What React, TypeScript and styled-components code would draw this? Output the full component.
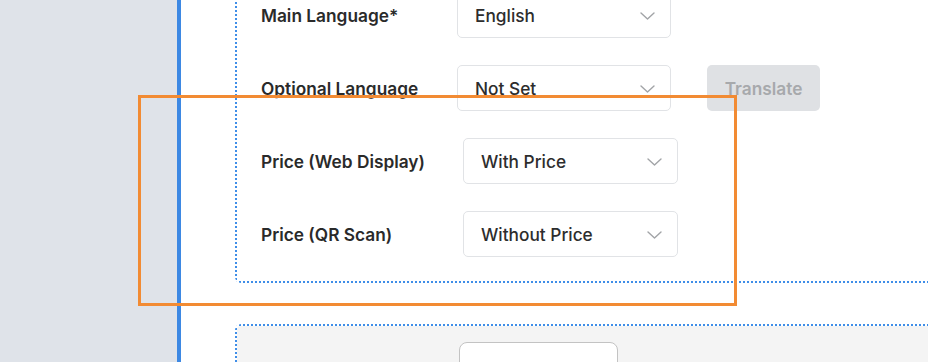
import { styled, createGlobalStyle } from "styled-components";

const Global = createGlobalStyle`
body {
    margin: 0;
    font-family: Inter, "Noto Sans", sans-serif;
    background-color: #ffffff;
}
`

const Chevron = () => (
    <svg width="15" height="8" viewBox="0 0 15 8" fill="none">
        <path d="M1 1l6.5 6 6.5-6" stroke="#a2a4a7" strokeWidth="1.4" strokeLinecap="round" strokeLinejoin="round" />
    </svg>
)

const Field = ({ label, value, lw, sw, extra }: { label: string, value: string, lw: number, sw: number, extra?: boolean }) => (
    <Row>
        <Label lw={lw}>{label}</Label>
        <Select sw={sw}>
            <span>{value}</span>
            <Chevron />
        </Select>
        {extra && <Button disabled>Translate</Button>}
    </Row>
)

export default function App() {
    return <Page>
        <Global />
        <Sidebar />
        <Rule />
        <Main>
            <Section bg="#ffffff">
                <Field label="Main Language*" value="English" lw={196} sw={214} />
                <Field label="Optional Language" value="Not Set" lw={196} sw={214} extra />
                <Field label="Price (Web Display)" value="With Price" lw={202} sw={215} />
                <Field label="Price (QR Scan)" value="Without Price" lw={202} sw={215} />
            </Section>
            <GraySection bg="#f4f4f4">
                <Ghost />
            </GraySection>
        </Main>
        <Highlight />
    </Page>;
}

const dots = "#3f8ee8"

const Page = styled.div`
position: relative;
display: flex;
width: 928px;
height: 362px;
overflow: hidden;
`
const Sidebar = styled.div`
width: 177px;
flex-shrink: 0;
background-color: #dfe3e9;
`
const Rule = styled.div`
width: 4px;
flex-shrink: 0;
background-color: #3d88e3;
`
const Main = styled.div`
flex: 1;
padding-left: 54px;
display: flex;
flex-direction: column;
gap: 41px;
overflow: hidden;
`
const Dotted = styled.div<{ bg: string }>`
width: 760px;
box-sizing: border-box;
border: 2px solid transparent;
border-radius: 6px;
background:
    linear-gradient(90deg, ${dots} 50%, transparent 0) top left / 4px 2px repeat-x border-box,
    linear-gradient(90deg, ${dots} 50%, transparent 0) bottom left / 4px 2px repeat-x border-box,
    linear-gradient(180deg, ${dots} 50%, transparent 0) top left / 2px 4px repeat-y border-box,
    linear-gradient(180deg, ${dots} 50%, transparent 0) top right / 2px 4px repeat-y border-box,
    ${({ bg }) => bg} padding-box;
`
const Section = styled(Dotted)`
margin-top: -34px;
padding: 24px 0 24px 24px;
display: flex;
flex-direction: column;
gap: 27px;
`
const GraySection = styled(Dotted)`
min-height: 80px;
padding: 16px 0 0 222px;
`
const Ghost = styled.div`
width: 159px;
height: 46px;
background-color: #ffffff;
border: 1.5px solid #c3c3c3;
border-radius: 8px;
box-sizing: border-box;
`
const Row = styled.div`
display: flex;
align-items: center;
`
const Label = styled.div<{ lw: number }>`
width: ${({ lw }) => lw}px;
flex-shrink: 0;
padding-top: 1px;
font-size: 17.3px;
font-weight: 600;
color: #2a2a2a;
`
const Select = styled.div<{ sw: number }>`
width: ${({ sw }) => sw}px;
height: 46px;
box-sizing: border-box;
border: 1px solid #e1e3e6;
border-radius: 5px;
display: flex;
align-items: center;
justify-content: space-between;
padding: 1px 15px 0 17px;
font-size: 17.3px;
font-weight: 500;
color: #2d2d2d;
background-color: #ffffff;
`
const Button = styled.button`
margin-left: 36px;
width: 113px;
height: 46px;
border: none;
border-radius: 5px;
background-color: #dfe1e4;
color: #a7a9ac;
font-family: Inter, "Noto Sans", sans-serif;
font-size: 17.3px;
font-weight: 600;
`
const Highlight = styled.div`
position: absolute;
left: 138px;
top: 95px;
width: 599px;
height: 211px;
box-sizing: border-box;
border: 3px solid #f28b33;
pointer-events: none;
`
